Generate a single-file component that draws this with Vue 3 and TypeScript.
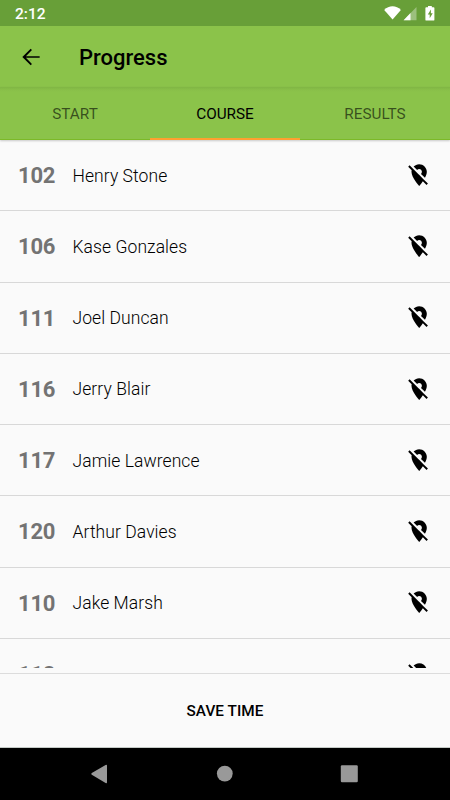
<script setup lang="ts">
interface Runner {
  bib: string
  name: string
}

const tabs: string[] = ['START', 'COURSE', 'RESULTS']
const activeTab = 'COURSE'

const runners: Runner[] = [
  { bib: '102', name: 'Henry Stone' },
  { bib: '106', name: 'Kase Gonzales' },
  { bib: '111', name: 'Joel Duncan' },
  { bib: '116', name: 'Jerry Blair' },
  { bib: '117', name: 'Jamie Lawrence' },
  { bib: '120', name: 'Arthur Davies' },
  { bib: '110', name: 'Jake Marsh' },
  { bib: '118', name: '' },
]
</script>

<template>
  <div class="screen">
    <header class="status">
      <span class="clock">2:12</span>
      <svg class="status-icons" width="52" height="18" viewBox="0 0 52 18">
        <path d="M1.200 4.900C5.800 0 13.300 0 17.900 4.900L9.600 14.600z" fill="#fff" />
        <path d="M33.500 2v13.200H20.600z" fill="#fff" opacity=".35" />
        <path d="M27.500 8v7.200h-6.900z" fill="#fff" />
        <path d="M43.300 2.200h1.700V1h3.800v1.200h1.700q.9 0 .9.900v11.600q0 .9-.9.900h-7.200q-.9 0-.9-.9V3.100q0-.9.9-.9z" fill="#fff" />
        <path d="M47.900 4.500l-3.100 5h1.900v3.800l3-5.100h-1.800z" fill="#689f38" />
      </svg>
    </header>

    <div class="appbar">
      <svg class="back" width="26" height="26" viewBox="0 0 24 24">
        <path d="M20 11.200H7.300l5.600-5.700L11.700 4.300 4 12l7.700 7.700 1.200-1.200-5.600-5.700H20z" />
      </svg>
      <h1>Progress</h1>
    </div>

    <nav class="tabs">
      <div v-for="tab in tabs" :key="tab" class="tab" :class="{ active: tab === activeTab }">{{ tab }}</div>
    </nav>

    <main class="list">
      <div v-for="runner in runners" :key="runner.bib" class="row">
        <span class="bib">{{ runner.bib }}</span>
        <span class="name">{{ runner.name }}</span>
        <svg class="pin" viewBox="0 0 24 24">
          <path d="M12 6.500c1.380 0 2.500 1.120 2.500 2.500 0 .74-.33 1.390-.83 1.850l3.630 3.630c.98-1.860 1.700-3.800 1.700-5.480 0-3.870-3.130-7-7-7-1.980 0-3.760.83-5.040 2.150l3.190 3.190c.46-.52 1.110-.84 1.850-.84zm4.370 9.600l-4.630-4.630-.11-.11L3.270 3 2 4.270l3.180 3.180C5.070 7.950 5 8.470 5 9c0 5.250 7 13 7 13s1.670-1.850 3.380-4.350L18.730 21 20 19.730l-3.630-3.630z" />
        </svg>
      </div>
    </main>

    <div class="footer">
      <button class="save" type="button">SAVE TIME</button>
    </div>

    <div class="sysnav">
      <svg width="450" height="52" viewBox="0 0 450 52" fill="#999">
        <path d="M91.800 24.900L105.600 17.100q1.400-.7 1.400.7v16.400q0 1.400-1.400.7L91.800 26.700q-1.200-.9 0-1.800z" />
        <circle cx="224.800" cy="25.600" r="7.900" />
        <rect x="340.800" y="17.200" width="17" height="17" rx="1.200" />
      </svg>
    </div>
  </div>
</template>

<style>
body {
  margin: 0;
}
</style>

<style scoped>
.screen {
  width: 450px;
  height: 800px;
  display: flex;
  flex-direction: column;
  overflow: hidden;
  background: #fafafa;
  color: #000;
  font-family: Roboto, sans-serif;
}
.status {
  height: 26px;
  flex: none;
  box-sizing: border-box;
  padding: 5px 15px 0;
  display: flex;
  justify-content: space-between;
  align-items: flex-start;
  background: #689f38;
  color: #fff;
}
.clock {
  font-size: 15.5px;
  line-height: 18px;
  font-weight: 500;
}
.status-icons {
  display: block;
}
.appbar {
  height: 61px;
  flex: none;
  box-sizing: border-box;
  display: flex;
  align-items: center;
  padding: 0 18px 0;
  background: #8bc34a;
}
.back {
  flex: none;
}
h1 {
  margin: 2px 0 0 35px;
  font-size: 22px;
  line-height: 26px;
  font-weight: 480;
}
.tabs {
  height: 53px;
  flex: none;
  display: flex;
  background: linear-gradient(#80b544, #89c049 3px, #8bc34a 5px);
  box-shadow: 0 1px 2px rgba(0, 0, 0, 0.2);
  position: relative;
}
.tab {
  flex: 1;
  box-sizing: border-box;
  height: 53px;
  padding-top: 2px;
  line-height: 50px;
  text-align: center;
  font-size: 15.3px;
  font-weight: 420;
  color: rgba(0, 0, 0, 0.6);
  border-bottom: 1px solid #7cb928;
}
.tab.active {
  color: #000;
  border-bottom: 2px solid #ffa030;
}
.list {
  height: 528px;
  flex: none;
  overflow: hidden;
}
.row {
  height: 71.25px;
  box-sizing: border-box;
  display: flex;
  align-items: center;
  padding: 1px 17.5px 0 18px;
  border-bottom: 1px solid #d8d8d8;
}
.bib {
  width: 54.5px;
  font-size: 22px;
  letter-spacing: -0.2px;
  font-weight: 700;
  color: #737373;
}
.name {
  flex: 1;
  font-size: 17.5px;
  font-weight: 360;
  letter-spacing: 0.07px;
  color: #000;
}
.pin {
  width: 26.3px;
  height: 26.3px;
  margin-top: -1px;
}
.footer {
  height: 80px;
  flex: none;
  box-sizing: border-box;
  padding-top: 5px;
}
.save {
  width: 100%;
  height: 75px;
  box-sizing: border-box;
  padding: 1px 0 0;
  border: 0;
  border-top: 1px solid #dcdcdc;
  border-bottom: 1px solid #c4cac6;
  background: #fafafa;
  color: #000;
  font-family: inherit;
  font-size: 15.3px;
  font-weight: 470;
  letter-spacing: 0.06px;
}
.sysnav {
  height: 52px;
  flex: none;
  background: #000;
}
.sysnav svg {
  display: block;
}
</style>
